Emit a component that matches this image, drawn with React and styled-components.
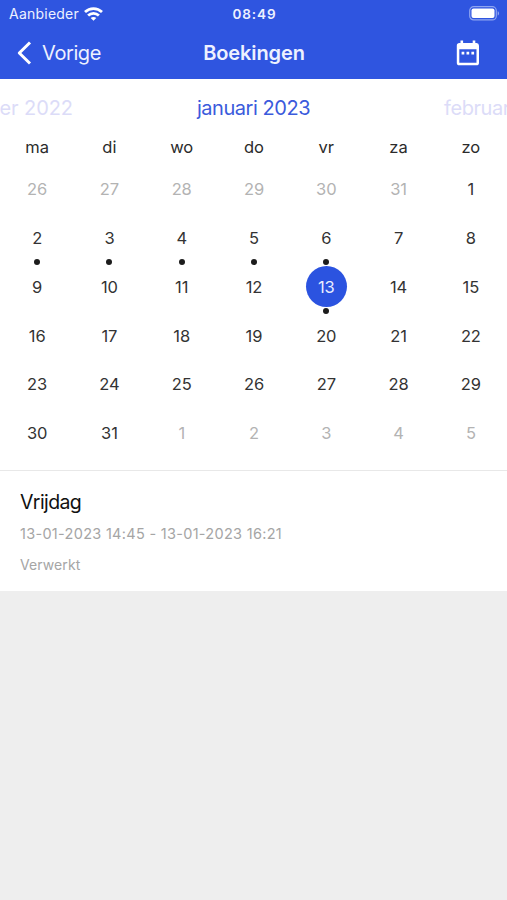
import React, { useState } from 'react'
import styled, { createGlobalStyle } from 'styled-components'

const GlobalStyle = createGlobalStyle`
  * {
    box-sizing: border-box;
  }

  body {
    margin: 0;
    background: #eeeeee;
    font-family: Inter, Roboto, "Liberation Sans", sans-serif;
    color: #2b2b2b;
  }

  button {
    border: 0;
    padding: 0;
    background: none;
    font: inherit;
    color: inherit;
    cursor: pointer;
  }
`;

const Screen = styled.div`
  min-height: 100vh;
  overflow: hidden;
`;

const Header = styled.header`
  height: 79px;
  background: #2f55e0;
  color: #edf1ff;
`;

const StatusBar = styled.div`
  display: grid;
  grid-template-columns: 1fr auto 1fr;
  align-items: center;
  height: 27px;
  padding: 0 7px 0 9px;
`;

const Carrier = styled.div`
  display: flex;
  align-items: center;
  gap: 5px;
  font-size: 14px;
  letter-spacing: 0.23px;
  line-height: 27px;
`;

const Clock = styled.div`
  padding-top: 1px;
  font-size: 13.5px;
  font-weight: 600;
  letter-spacing: 0.9px;
  line-height: 26px;
`;

const BatteryIcon = styled.svg`
  justify-self: end;
`;

const NavBar = styled.nav`
  display: grid;
  grid-template-columns: 1fr auto 1fr;
  align-items: center;
  height: 51px;
  padding: 0 27px 0 17px;
`;

const BackButton = styled.button`
  display: flex;
  align-items: center;
  justify-self: start;
  gap: 10px;
  font-size: 20px;
  letter-spacing: -0.4px;
`;

const Title = styled.h1`
  margin: 0 0 0 11px;
  font-size: 20px;
  font-weight: 600;
  letter-spacing: -0.1px;
`;

const CalendarButton = styled.button`
  display: flex;
  justify-self: end;
`;

const Calendar = styled.section`
  height: 392px;
  background: #fff;
  border-bottom: 1px solid #e8e8e8;
`;

const Months = styled.div`
  display: grid;
  grid-template-columns: minmax(0, 1fr) auto minmax(0, 1fr);
  align-items: center;
  height: 56px;
  padding-top: 1px;
  font-size: 20px;
  white-space: nowrap;
`;

const Month = styled.span`
  color: ${({ $current }) => ($current ? '#3b5bdc' : '#dcdcf8')};
  letter-spacing: -0.45px;
`;

const PreviousMonth = styled(Month)`
  justify-self: end;
  padding-right: 124px;
  letter-spacing: -0.1px;
`;

const NextMonth = styled(Month)`
  padding-left: 134px;
`;

const WeekDays = styled.div`
  display: grid;
  grid-template-columns: repeat(7, 1fr);
  height: 23px;
  padding-left: 1px;
  font-size: 16.5px;
  line-height: 24px;
  text-align: center;
`;

const Days = styled.div`
  display: grid;
  grid-template-columns: repeat(7, 1fr);
  grid-auto-rows: 48.85px;
  padding: 10px 0 0 1px;
`;

const DayCell = styled.div`
  position: relative;
  display: flex;
  justify-content: center;
`;

const Day = styled.button`
  width: 41px;
  height: 41px;
  border-radius: 50%;
  font-size: 16.5px;
  line-height: 42px;
  letter-spacing: -0.1px;
  color: ${({ $outside }) => ($outside ? '#b3b3b3' : '#333')};

  ${({ $selected }) => $selected && `
    background: #2b53e0;
    color: #e8edff;
  `}
`;

const Dot = styled.span`
  position: absolute;
  top: 42px;
  width: 6px;
  height: 6px;
  border-radius: 50%;
  background: #1c1c1c;
`;

const Booking = styled.article`
  height: 120px;
  padding: 17px 20px 0;
  background: #fff;
`;

const BookingDay = styled.h2`
  margin: 0;
  font-size: 19.5px;
  font-weight: 400;
  line-height: 28px;
  letter-spacing: -0.6px;
  color: #111;
`;

const BookingText = styled.p`
  margin: 0;
  font-size: 14.5px;
  line-height: 20px;
  color: #a5a5a5;
`;

const BookingPeriod = styled(BookingText)`
  padding: 8px 0 10px;
  letter-spacing: 0.3px;
`;

const BookingStatus = styled(BookingText)`
  font-size: 14px;
  line-height: 21px;
  letter-spacing: 0.1px;
`;

const weekDays = ['ma', 'di', 'wo', 'do', 'vr', 'za', 'zo'];
const booked = [2, 3, 4, 5, 6, 13];

// six days of december, january itself and five days of february
const days = [
    ...[26, 27, 28, 29, 30, 31].map((day) => ({ key: `dec-${day}`, day, outside: true })),
    ...Array.from({ length: 31 }, (_, i) => ({ key: `jan-${i + 1}`, day: i + 1, outside: false })),
    ...[1, 2, 3, 4, 5].map((day) => ({ key: `feb-${day}`, day, outside: true })),
];

export default function App() {
    const [selected, setSelected] = useState('jan-13');

    return (
        <>
            <GlobalStyle />
            <Screen>
                <Header>
                    <StatusBar>
                        <Carrier>
                            Aanbieder
                            <svg width="19" height="14" viewBox="0 0 19 14" fill="none" stroke="#fff" strokeWidth="2.8">
                                <path d="M1 5.1C5.8.5 13.2.5 18 5.1" />
                                <path d="M4.1 8.6c3.1-2.9 7.7-2.9 10.8 0" />
                                <path d="M9.5 13.8 6.7 11c1.6-1.5 4-1.5 5.6 0z" fill="#fff" stroke="none" />
                            </svg>
                        </Carrier>
                        <Clock>08:49</Clock>
                        <BatteryIcon width="31" height="15" viewBox="0 0 31 15">
                            <rect x="0.7" y="0.7" width="26.6" height="13.2" rx="4" fill="none" stroke="#8fa5f0" strokeWidth="1.2" />
                            <rect x="2.5" y="2.5" width="23" height="9.6" rx="2" fill="#fff" />
                            <path d="M28.7 5.2c1.8.6 1.8 3.7 0 4.3z" fill="#8fa5f0" />
                        </BatteryIcon>
                    </StatusBar>
                    <NavBar>
                        <BackButton>
                            <svg width="15" height="24" viewBox="0 0 15 24" fill="none" stroke="#fff" strokeWidth="3" strokeLinejoin="round">
                                <path d="M13 1.5 2.3 12 13 22.5" />
                            </svg>
                            Vorige
                        </BackButton>
                        <Title>Boekingen</Title>
                        <CalendarButton aria-label="Kalender">
                            <svg width="24" height="26" viewBox="0 0 24 26" fill="#fff">
                                <path fillRule="evenodd" d="M4.5.5h2.6v2.6h9.6V.5h2.6v2.6h1.2A2.6 2.6 0 0 1 23 5.7v17a2.6 2.6 0 0 1-2.6 2.6H3.4a2.6 2.6 0 0 1-2.6-2.6v-17a2.6 2.6 0 0 1 2.6-2.6h1.1zM3.3 9.3v13.4h17.2V9.3z" />
                                <path d="M5.6 11.7h2.7v2.7H5.6zM10.5 11.7h2.7v2.7h-2.7zM15.4 11.7h2.7v2.7h-2.7z" />
                            </svg>
                        </CalendarButton>
                    </NavBar>
                </Header>

                <Calendar>
                    <Months>
                        <PreviousMonth>december 2022</PreviousMonth>
                        <Month $current>januari 2023</Month>
                        <NextMonth>februari 2023</NextMonth>
                    </Months>
                    <WeekDays>
                        {weekDays.map((name) => <span key={name}>{name}</span>)}
                    </WeekDays>
                    <Days>
                        {days.map(({ key, day, outside }) => (
                            <DayCell key={key}>
                                <Day $outside={outside} $selected={key === selected} onClick={() => setSelected(key)}>
                                    {day}
                                </Day>
                                {!outside && booked.includes(day) && <Dot />}
                            </DayCell>
                        ))}
                    </Days>
                </Calendar>

                <Booking>
                    <BookingDay>Vrijdag</BookingDay>
                    <BookingPeriod>13-01-2023 14:45 - 13-01-2023 16:21</BookingPeriod>
                    <BookingStatus>Verwerkt</BookingStatus>
                </Booking>
            </Screen>
        </>
    )
}
